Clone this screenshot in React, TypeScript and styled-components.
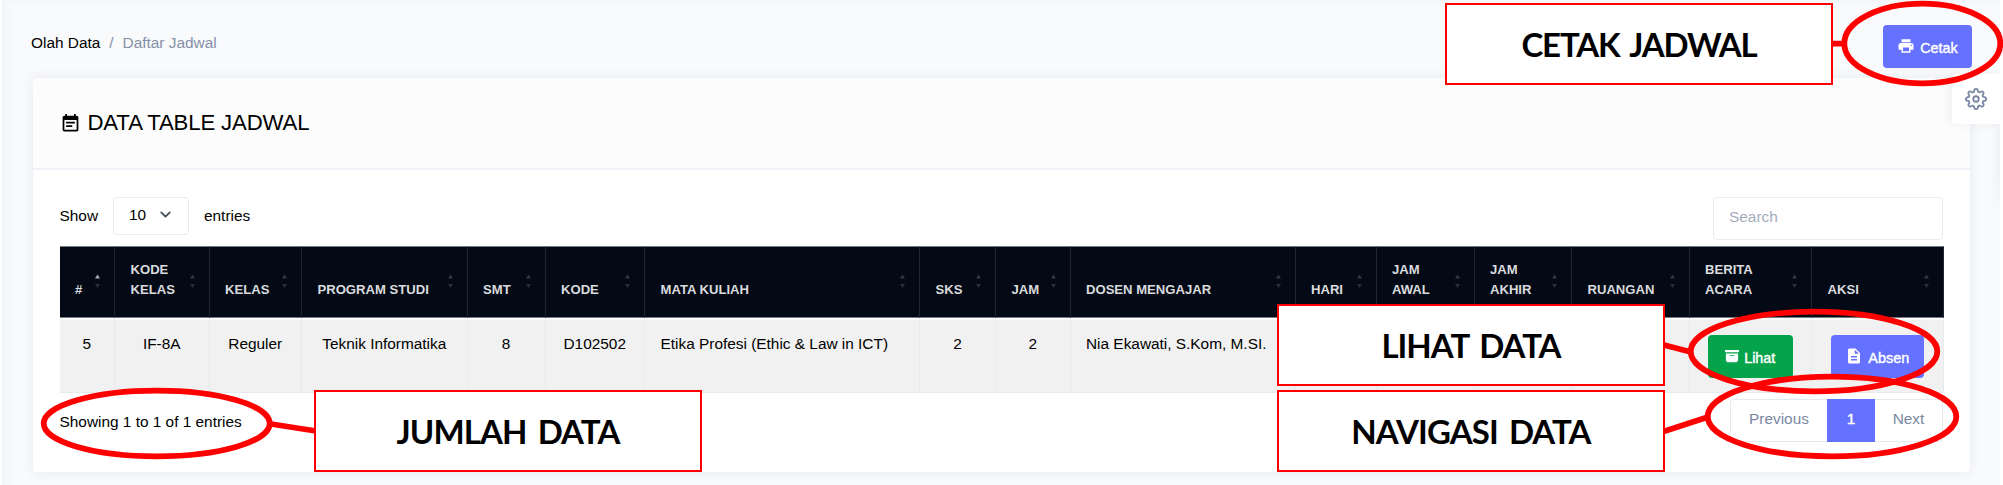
import React from 'react';
import styled, { createGlobalStyle, css } from 'styled-components';
import { MdEventNote, MdPrint, MdDescription } from 'react-icons/md';
import { BsArchiveFill } from 'react-icons/bs';
import { FiSettings, FiChevronDown } from 'react-icons/fi';

const GlobalStyle = createGlobalStyle`
  * { box-sizing: border-box; }
  body {
    margin: 0;
    background: #fff;
    color: #000;
    font: 15.4px/20px 'Liberation Sans', Arial, sans-serif;
    overflow: hidden;
  }
`;

const Page = styled.div`
  position: relative;
  width: 2003px;
  height: 485px;
  padding-right: 3px;
  overflow: hidden;
`;

const Content = styled.main`
  height: 485px;
  border-left: 2px solid #fff;
  padding: 0 30px 0 31px;
  background:
    linear-gradient(to right, #eceff4, #f4f6f9 2px, rgba(244, 246, 249, 0) 12px),
    linear-gradient(to bottom, #f3f5f8, rgba(249, 250, 251, 0) 6px),
    #f9fafb;
`;

const TopBar = styled.header`
  display: flex;
  justify-content: space-between;
  align-items: flex-start;
  height: 78px;
  padding: 25px 0 0;
`;

const Breadcrumb = styled.nav`
  display: flex;
  gap: 9px;
  margin: 8px 0 0 -2px;
`;

const Crumb = styled.span<{ $muted?: boolean }>`
  color: ${p => (p.$muted ? '#8590a8' : '#000')};
`;

const Button = styled.button<{ $tone: 'primary' | 'success'; $width: number }>`
  display: inline-flex;
  align-items: center;
  justify-content: center;
  gap: 5px;
  width: ${p => p.$width}px;
  height: 43px;
  padding: 2px 0 0;
  border: 0;
  border-radius: 4px;
  background: ${p => (p.$tone === 'primary' ? '#6571ff' : '#05a34a')};
  color: #fff;
  font: 14.4px/20px 'Liberation Sans', Arial, sans-serif;
  -webkit-text-stroke: 0.4px #fff;
  svg { margin-top: -3px; }
`;

const CetakButton = styled(Button)`
  margin-right: -2px;
`;

const Card = styled.section`
  display: flex;
  flex-direction: column;
  height: 394px;
  border-radius: 4px;
  background: #fff;
  box-shadow: 0 0 11px 1px #e9ecf3;
`;

const CardHeader = styled.div`
  display: flex;
  align-items: center;
  gap: 7px;
  height: 92px;
  padding: 0 26.5px;
  border-bottom: 2px solid #f1f2f8;
  border-radius: 4px 4px 0 0;
  background: #fcfcfc;
`;

const Title = styled.h1`
  margin: 0;
  font-size: 22.2px;
  line-height: 28px;
  font-weight: 400;
  letter-spacing: -0.15px;
`;

const CardBody = styled.div`
  padding: 27px 27px 0 26.5px;
`;

const Controls = styled.div`
  display: flex;
  justify-content: space-between;
  align-items: flex-start;
  height: 49px;
`;

const Length = styled.div`
  display: flex;
  align-items: center;
  height: 37px;
  gap: 15px;
`;

const Select = styled.div`
  display: flex;
  align-items: center;
  justify-content: space-between;
  width: 76px;
  height: 38px;
  padding: 0 14px 2px 15px;
  border: 1.5px solid #e9ecef;
  border-radius: 4px;
`;

const SearchBox = styled.input`
  width: 230px;
  height: 43px;
  padding: 0 15px 3px;
  border: 1.5px solid #e9ecef;
  border-radius: 4px;
  outline: 0;
  font: inherit;
  &::placeholder { color: #a3adbc; opacity: 1; }
`;

const Table = styled.table`
  width: 1884px;
  table-layout: fixed;
  border-collapse: separate;
  border-spacing: 0;
`;

const HeadCell = styled.th`
  height: 72px;
  padding: 0 13px 17px 15.5px;
  border-top: 1px solid #777b82;
  border-right: 1px solid #20262f;
  border-bottom: 1px solid #777b82;
  background: #040a15;
  color: #d9dbde;
  font-size: 13.1px;
  line-height: 20px;
  text-align: left;
  vertical-align: bottom;
  white-space: pre-line;
`;

const HeadContent = styled.div`
  display: flex;
  justify-content: space-between;
  align-items: flex-end;
`;

const SortMark = styled.svg`
  flex: none;
  width: 7px;
  height: 14px;
  margin-bottom: 12px;
`;

const Cell = styled.td<{ $align?: 'left' | 'center'; $button?: boolean }>`
  height: 75px;
  padding: ${p => (p.$button ? '15px 0 0' : '14px 15.5px 0')};
  border-top: 2px solid #fafafb;
  border-right: 1px solid #e6e9ee;
  border-bottom: 1px solid #e6e9ee;
  background: #f1f1f1;
  text-align: ${p => p.$align ?? 'center'};
  vertical-align: top;
  white-space: nowrap;
`;

const Footer = styled.div`
  display: flex;
  justify-content: space-between;
  padding-top: 6px;
`;

const Info = styled.div`
  padding-top: 13px;
`;

const Pagination = styled.div`
  display: flex;
  height: 43px;
`;

const PageItem = styled.div<{ $width: number; $active?: boolean; $end?: 'left' | 'right' }>`
  width: ${p => p.$width}px;
  padding-top: 9px;
  border: 1.5px solid #e6e9ee;
  color: #7987a1;
  text-align: center;
  ${p => p.$end === 'left' && css`border-right: 0; border-radius: 4px 0 0 4px;`}
  ${p => p.$end === 'right' && css`border-left: 0; border-radius: 0 4px 4px 0;`}
  ${p => p.$active && css`
    border-color: #6571ff;
    background: #6571ff;
    color: #fff;
    -webkit-text-stroke: 0.4px #fff;
  `}
`;

const SettingsTab = styled.div`
  position: absolute;
  top: 74px;
  right: 3px;
  display: flex;
  align-items: center;
  justify-content: center;
  width: 48px;
  height: 50px;
  border-radius: 4px 0 0 4px;
  background: #fff;
  color: #7987a1;
  box-shadow: -3px 0 8px rgba(183, 192, 206, 0.2);
`;

const PanelShade = styled.div`
  position: absolute;
  top: 124px;
  right: 3px;
  width: 10px;
  height: 88px;
  background: linear-gradient(to right, rgba(236, 239, 244, 0), #eff1f5);
  mask-image: linear-gradient(#000 60%, transparent);
`;

const Callout = styled.div<{ $x: number; $y: number; $spacing: number }>`
  position: absolute;
  left: ${p => p.$x}px;
  top: ${p => p.$y}px;
  display: flex;
  align-items: center;
  justify-content: center;
  width: 388px;
  height: 82px;
  border: 2px solid #f00;
  background: #fff;
  font: 700 33px/40px Lato, sans-serif;
  letter-spacing: ${p => p.$spacing}px;
  word-spacing: 4px;
`;

const Marks = styled.svg`
  position: absolute;
  inset: 0;
  fill: none;
  stroke: #f00;
  stroke-width: 5.8;
`;

type Column = { label: string; width: number; value: React.ReactNode; align?: 'left'; button?: boolean };

const columns: Column[] = [
  { label: '#', width: 55.5, value: '5' },
  { label: 'KODE\nKELAS', width: 94.5, value: 'IF-8A' },
  { label: 'KELAS', width: 92.5, value: 'Reguler' },
  { label: 'PROGRAM STUDI', width: 165.5, value: 'Teknik Informatika' },
  { label: 'SMT', width: 78, value: '8' },
  { label: 'KODE', width: 99.5, value: 'D102502' },
  { label: 'MATA KULIAH', width: 275, value: 'Etika Profesi (Ethic & Law in ICT)', align: 'left' },
  { label: 'SKS', width: 76, value: '2' },
  { label: 'JAM', width: 74.5, value: '2' },
  { label: 'DOSEN MENGAJAR', width: 225, value: 'Nia Ekawati, S.Kom, M.SI.', align: 'left' },
  { label: 'HARI', width: 81, value: '' },
  { label: 'JAM\nAWAL', width: 98, value: '' },
  { label: 'JAM\nAKHIR', width: 97.5, value: '' },
  { label: 'RUANGAN', width: 117.5, value: '' },
  {
    label: 'BERITA\nACARA', width: 122.5, button: true,
    value: <Button $tone="success" $width={85}><BsArchiveFill size={14} />Lihat</Button>,
  },
  {
    label: 'AKSI', width: 131.5, button: true,
    value: <Button $tone="primary" $width={93}><MdDescription size={18} />Absen</Button>,
  },
];

function Sort({ active }: { active: boolean }) {
  return (
    <SortMark viewBox="0 0 7 14">
      <path d="M1 4.6 3.5.6 6 4.6z" fill={active ? '#a9adb2' : '#33383f'} />
      <path d="M1 10 3.5 14 6 10z" fill="#2b3038" />
    </SortMark>
  );
}

export default function App() {
  return (
    <Page>
      <GlobalStyle />
      <Content>
        <TopBar>
          <Breadcrumb>
            <Crumb>Olah Data</Crumb>
            <Crumb $muted>/</Crumb>
            <Crumb $muted>Daftar Jadwal</Crumb>
          </Breadcrumb>
          <CetakButton $tone="primary" $width={89}><MdPrint size={18} />Cetak</CetakButton>
        </TopBar>
        <Card>
          <CardHeader>
            <MdEventNote size={21} />
            <Title>DATA TABLE JADWAL</Title>
          </CardHeader>
          <CardBody>
            <Controls>
              <Length>
                <span>Show</span>
                <Select>10<FiChevronDown size={17} strokeWidth={2.6} color="#484f5c" /></Select>
                <span>entries</span>
              </Length>
              <SearchBox placeholder="Search" />
            </Controls>
            <Table>
              <colgroup>
                {columns.map((c, i) => <col key={i} width={c.width} />)}
              </colgroup>
              <thead>
                <tr>
                  {columns.map((c, i) => (
                    <HeadCell key={i}>
                      <HeadContent>{c.label}<Sort active={i === 0} /></HeadContent>
                    </HeadCell>
                  ))}
                </tr>
              </thead>
              <tbody>
                <tr>
                  {columns.map((c, i) => (
                    <Cell key={i} $align={c.align} $button={c.button}>{c.value}</Cell>
                  ))}
                </tr>
              </tbody>
            </Table>
            <Footer>
              <Info>Showing 1 to 1 of 1 entries</Info>
              <Pagination>
                <PageItem $width={97} $end="left">Previous</PageItem>
                <PageItem $width={48} $active>1</PageItem>
                <PageItem $width={68} $end="right">Next</PageItem>
              </Pagination>
            </Footer>
          </CardBody>
        </Card>
      </Content>
      <PanelShade />
      <SettingsTab><FiSettings size={22} /></SettingsTab>
      <Marks width="2003" height="485" viewBox="0 0 2003 485">
        <ellipse cx="1922.3" cy="43.5" rx="78" ry="39.8" />
        <ellipse cx="1814" cy="351.5" rx="123.3" ry="39.8" />
        <ellipse cx="1832" cy="416.5" rx="124.3" ry="39.8" />
        <ellipse cx="156.7" cy="423.5" rx="113" ry="32.8" />
        <path d="M1830 43.7H1844M1662 344.5 1691 352M1662 432 1708 417M271 424 316 431" />
      </Marks>
      <Callout $x={1445} $y={3} $spacing={-1.2}>CETAK JADWAL</Callout>
      <Callout $x={1277} $y={304} $spacing={-1}>LIHAT DATA</Callout>
      <Callout $x={1277} $y={390} $spacing={-0.9}>NAVIGASI DATA</Callout>
      <Callout $x={314} $y={390} $spacing={-0.9}>JUMLAH DATA</Callout>
    </Page>
  );
}
